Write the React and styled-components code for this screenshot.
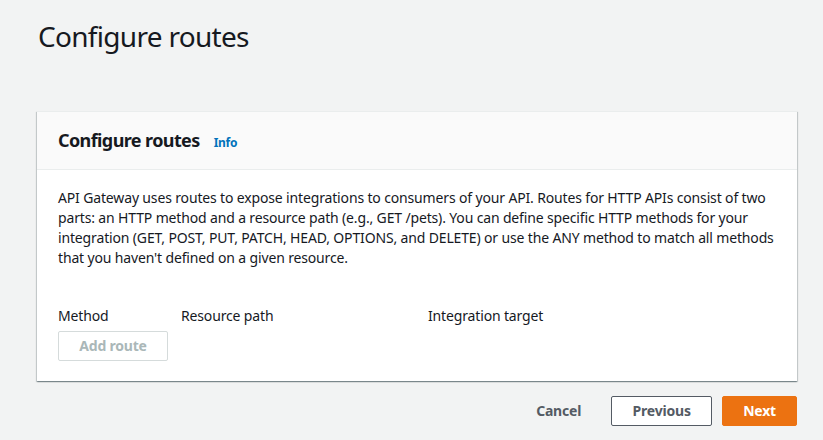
import React from 'react'
import styled, { createGlobalStyle } from 'styled-components'

const GlobalStyle = createGlobalStyle`
    html, body {
        margin: 0;
        padding: 0;
        background: #f2f3f3;
    }
    body {
        font-family: "Noto Sans", "Open Sans", Arial, sans-serif;
        color: #16191f;
        font-size: 14px;
        line-height: 20px;
        letter-spacing: -0.15px;
    }
`

const Page = styled.div`
    width: 823px;
    height: 440px;
    box-sizing: border-box;
    padding: 14px 26px 0 37px;
    overflow: hidden;
`

const PageTitle = styled.h1`
    margin: 0 0 0 1px;
    font-size: 28px;
    line-height: 44px;
    font-weight: 400;
    letter-spacing: -0.7px;
    height: 97px;
`

const Card = styled.section`
    background: #fff;
    box-shadow: 0 1px 1px 0 rgba(0, 28, 36, 0.3),
        1px 1px 1px 0 rgba(0, 28, 36, 0.15),
        -1px 1px 1px 0 rgba(0, 28, 36, 0.15);
    border-top: 1px solid #eaeded;
`

const CardHeader = styled.header`
    display: flex;
    align-items: baseline;
    gap: 14px;
    height: 58px;
    box-sizing: border-box;
    padding: 17px 21px 0;
    background: #fafafa;
    border-bottom: 1px solid #eaeded;
`

const CardTitle = styled.h2`
    margin: 0;
    font-size: 18px;
    line-height: 22px;
    font-weight: 700;
    letter-spacing: -0.6px;
`

const InfoLink = styled.a`
    color: #0073bb;
    font-size: 12px;
    font-weight: 700;
    letter-spacing: -0.3px;
    text-decoration: none;
`

const CardBody = styled.div`
    padding: 18px 20px 20px 21px;
`

const Description = styled.p`
    margin: 0 0 38px;
`

const RouteHeader = styled.div`
    display: grid;
    grid-template-columns: 123px 247px 1fr;
    margin-bottom: 5px;
`

const ColumnLabel = styled.span`
    font-size: 14px;
`

const Button = styled.button`
    font-family: inherit;
    font-size: 14px;
    font-weight: 700;
    line-height: 20px;
    letter-spacing: -0.2px;
    border-radius: 2px;
    padding: 4px 20px;
    min-width: ${p => p.$width || 0}px;
    cursor: pointer;
    background: ${p => (p.$primary ? '#ec7211' : '#fff')};
    color: ${p => (p.$disabled ? '#aab7b8' : p.$primary ? '#fff' : '#545b64')};
    border: 1px solid ${p => (p.$disabled ? '#d5dbdb' : p.$primary ? '#ec7211' : '#545b64')};
`

const LinkButton = styled.button`
    font-family: inherit;
    font-size: 14px;
    font-weight: 700;
    line-height: 20px;
    letter-spacing: -0.2px;
    color: #545b64;
    background: none;
    border: none;
    padding: 4px 20px;
`

const Footer = styled.div`
    display: flex;
    justify-content: flex-end;
    align-items: center;
    gap: 10px;
    margin-top: 15px;
`

export default function App() {
    return <Page>
        <GlobalStyle />
        <PageTitle>Configure routes</PageTitle>
        <Card>
            <CardHeader>
                <CardTitle>Configure routes</CardTitle>
                <InfoLink href="#">Info</InfoLink>
            </CardHeader>
            <CardBody>
                <Description>
                    API Gateway uses routes to expose integrations to consumers of your API. Routes for HTTP APIs consist of two parts: an HTTP method and a resource path (e.g., GET /pets). You can define specific HTTP methods for your integration (GET, POST, PUT, PATCH, HEAD, OPTIONS, and DELETE) or use the ANY method to match all methods that you haven't defined on a given resource.
                </Description>
                <RouteHeader>
                    <ColumnLabel>Method</ColumnLabel>
                    <ColumnLabel>Resource path</ColumnLabel>
                    <ColumnLabel>Integration target</ColumnLabel>
                </RouteHeader>
                <Button $disabled $width={110} disabled>Add route</Button>
            </CardBody>
        </Card>
        <Footer>
            <LinkButton>Cancel</LinkButton>
            <Button $width={101}>Previous</Button>
            <Button $primary $width={74}>Next</Button>
        </Footer>
    </Page>
}
